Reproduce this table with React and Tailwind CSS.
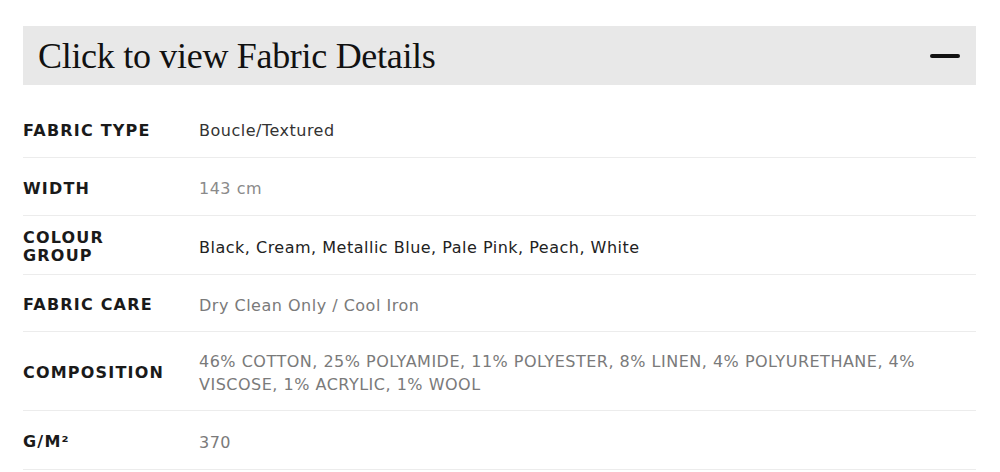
const rows = [
  { label: 'FABRIC TYPE', value: 'Boucle/Textured', tone: 'text-[#333333]', h: 'h-[58px]' },
  { label: 'WIDTH', value: '143 cm', tone: 'text-[#8a8a8a]', h: 'h-[58px]' },
  { label: ['COLOUR', 'GROUP'], value: 'Black, Cream, Metallic Blue, Pale Pink, Peach, White', tone: 'text-[#222222]', h: 'h-[59px]' },
  { label: 'FABRIC CARE', value: 'Dry Clean Only / Cool Iron', tone: 'text-[#7a7a7a]', h: 'h-[57px]' },
  {
    label: 'COMPOSITION',
    value: '46% COTTON, 25% POLYAMIDE, 11% POLYESTER, 8% LINEN, 4% POLYURETHANE, 4% VISCOSE, 1% ACRYLIC, 1% WOOL',
    tone: 'text-[#7a7a7a]',
    h: 'h-[79px]',
  },
  { label: 'G/M²', value: '370', tone: 'text-[#7a7a7a]', h: 'h-[59px]' },
];

export default function App() {
  return (
    <div className="bg-white w-[1000px] h-[472px] pt-[26px] pl-[23px] pr-[24px]">
      <button className="w-full h-[59px] bg-[#e8e8e8] flex items-center justify-between pl-[15px] pr-[16px] text-left">
        <span className="text-[#111111] text-[36px] leading-none tracking-[-0.3px]" style={{ fontFamily: '"Liberation Serif", serif' }}>
          Click to view Fabric Details
        </span>
        <span className="block w-[30px] h-[4px] bg-[#111111] rounded-full" />
      </button>

      <div className="mt-[15px]" style={{ fontFamily: '"DejaVu Sans", sans-serif' }}>
        {rows.map((r, i) => (
          <div key={i} className={`flex items-center pt-[4px] border-b border-[#ececec] ${r.h}`}>
            <div className="w-[176px] shrink-0 text-[16px] font-bold text-[#1a1a1a] leading-[18px] tracking-[1.2px]">
              {Array.isArray(r.label) ? (
                <>
                  {r.label[0]}
                  <br />
                  {r.label[1]}
                </>
              ) : (
                r.label
              )}
            </div>
            <div className={`w-[730px] text-[16px] leading-[23px] tracking-[0.5px] ${r.tone}`}>{r.value}</div>
          </div>
        ))}
      </div>
    </div>
  );
}
